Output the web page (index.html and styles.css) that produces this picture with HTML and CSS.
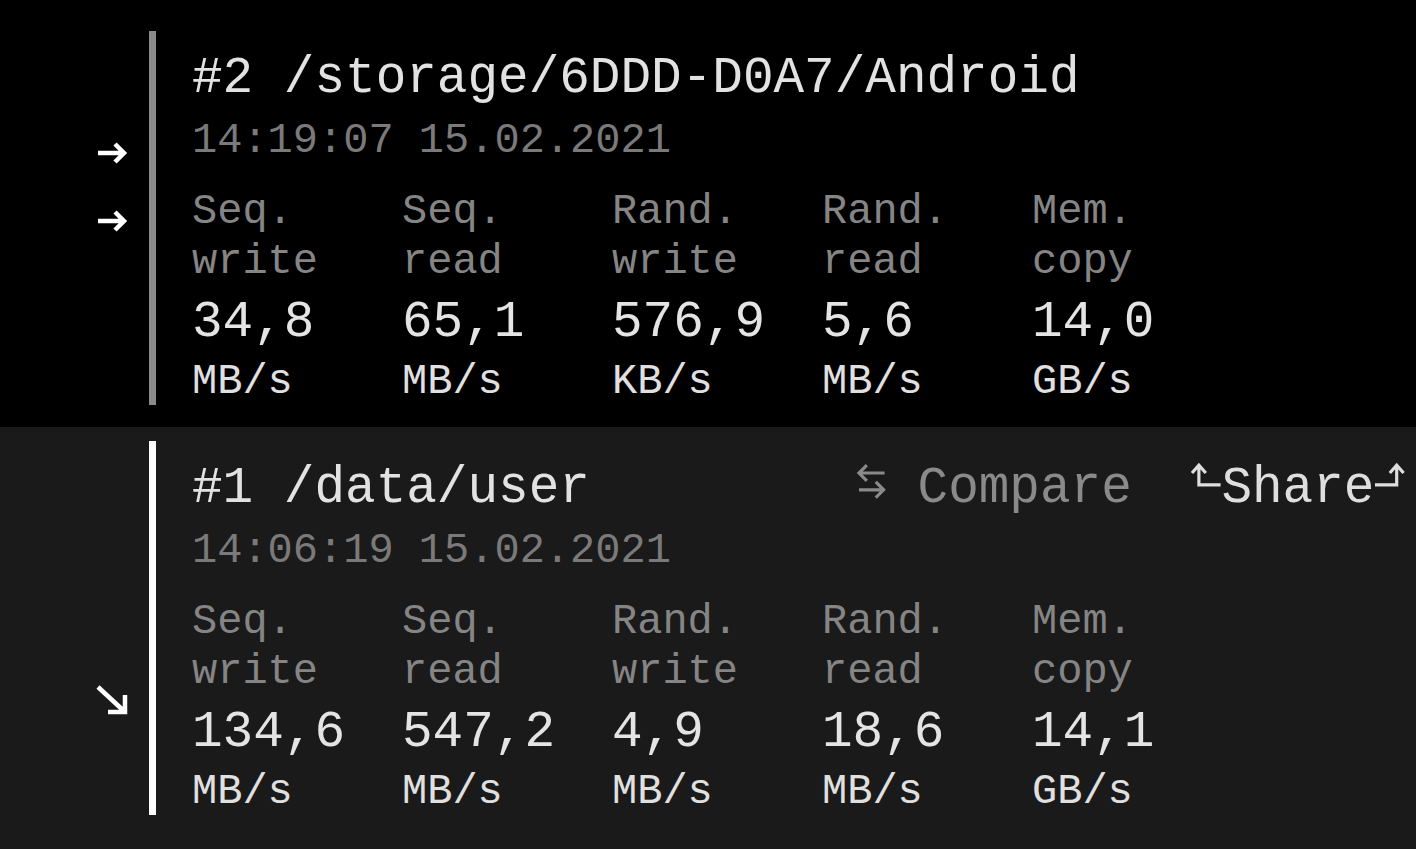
FILE: index.html
```html
<!DOCTYPE html>
<html>
<head>
<title>Benchmark results</title>
<link rel="stylesheet" href="styles.css">
</head>
<body>

<div class="run run-older">
	<div class="gutter gutter-older">
		<svg class="mark" width="32" height="24" viewBox="0 0 32 24"><path d="M2 12 H28 M19 3 L28 12 L19 21"/></svg>
		<svg class="mark" width="32" height="24" viewBox="0 0 32 24"><path d="M2 12 H28 M19 3 L28 12 L19 21"/></svg>
	</div>
	<div class="bar"></div>
	<div class="details">
		<div class="head">
			<div class="title">#2 /storage/6DDD-D0A7/Android</div>
		</div>
		<div class="date">14:19:07 15.02.2021</div>
		<div class="stats">
			<div class="stat"><div class="label">Seq.<br>write</div><div class="value">34,8</div><div class="unit">MB/s</div></div>
			<div class="stat"><div class="label">Seq.<br>read</div><div class="value">65,1</div><div class="unit">MB/s</div></div>
			<div class="stat"><div class="label">Rand.<br>write</div><div class="value">576,9</div><div class="unit">KB/s</div></div>
			<div class="stat"><div class="label">Rand.<br>read</div><div class="value">5,6</div><div class="unit">MB/s</div></div>
			<div class="stat"><div class="label">Mem.<br>copy</div><div class="value">14,0</div><div class="unit">GB/s</div></div>
		</div>
	</div>
</div><!-- end run #2 -->

<div class="run run-selected">
	<div class="gutter gutter-selected">
		<svg class="mark" width="32" height="32" viewBox="0 0 32 32"><path d="M2 4 L29 29 M12 29 H29 V12"/></svg>
	</div>
	<div class="bar"></div>
	<div class="details">
		<div class="head">
			<div class="title">#1 /data/user</div>
			<a class="action compare" href="#"><svg class="glyph" viewBox="0 0 31 51"><path d="M3 22 H29 M11 14 L3 22 L11 30 M3 39 H28 M20 31 L28 39 L20 47"/></svg> Compare</a>
			<a class="action share" href="#"><svg class="glyph" viewBox="0 0 31 51"><path d="M8 15 V34 H30 M1 22 L8 14 L15 22"/></svg>Share<svg class="glyph" viewBox="0 0 31 51"><path d="M23 15 V34 H1 M16 22 L23 14 L30 22"/></svg></a>
		</div>
		<div class="date">14:06:19 15.02.2021</div>
		<div class="stats">
			<div class="stat"><div class="label">Seq.<br>write</div><div class="value">134,6</div><div class="unit">MB/s</div></div>
			<div class="stat"><div class="label">Seq.<br>read</div><div class="value">547,2</div><div class="unit">MB/s</div></div>
			<div class="stat"><div class="label">Rand.<br>write</div><div class="value">4,9</div><div class="unit">MB/s</div></div>
			<div class="stat"><div class="label">Rand.<br>read</div><div class="value">18,6</div><div class="unit">MB/s</div></div>
			<div class="stat"><div class="label">Mem.<br>copy</div><div class="value">14,1</div><div class="unit">GB/s</div></div>
		</div>
	</div>
</div><!-- end run #1 -->

</body>
</html>
```

FILE: styles.css
```css
* {
	margin: 0;
	padding: 0;
}

html, body {
	height: 849px;
	overflow: hidden;
}

body {
	background: #1a1a1a;
	font-family: "Liberation Mono", "DejaVu Sans Mono", monospace;
	color: #e2e2e2;
}

a {
	color: inherit;
	text-decoration: none;
}

.run {
	display: flex;
}

.run-older {
	background: #000;
	padding: 31px 0 22px;
}

.run-selected {
	background: #1a1a1a;
	padding: 14px 0 34px;
}

.gutter {
	width: 149px;
	display: flex;
	flex-direction: column;
	align-items: flex-start;
}

.gutter-older {
	padding-top: 110px;
	gap: 44px;
}

.gutter-selected {
	padding-top: 242px;
}

.mark {
	margin-left: 96px;
	fill: none;
	stroke: #fff;
	stroke-width: 4.5;
}

.bar {
	width: 7px;
	background: #8a8a8a;
}

.run-selected .bar {
	background: #fff;
}

.details {
	flex: 1;
	padding: 10px 11px 0 36px;
}

.head {
	display: flex;
	align-items: baseline;
	font-size: 51px;
	line-height: 75px;
}

.title {
	flex: 1;
	white-space: nowrap;
}

.action {
	white-space: nowrap;
}

.compare {
	color: #8a8a8a;
}

.share {
	margin-left: 59px;
	color: #dedede;
}

.glyph {
	width: 0.6em;
	height: 1em;
	fill: none;
	stroke: currentColor;
	stroke-width: 3.2;
}

.date {
	font-size: 42px;
	line-height: 50px;
	color: #7a7a7a;
	margin-bottom: 21px;
}

.stats {
	display: grid;
	grid-template-columns: repeat(5, 210px);
}

.label {
	font-size: 42px;
	line-height: 50px;
	color: #858585;
}

.value {
	font-size: 51px;
	line-height: 72px;
	color: #e4e4e4;
}

.unit {
	font-size: 42px;
	line-height: 46px;
	color: #e0e0e0;
}
```
